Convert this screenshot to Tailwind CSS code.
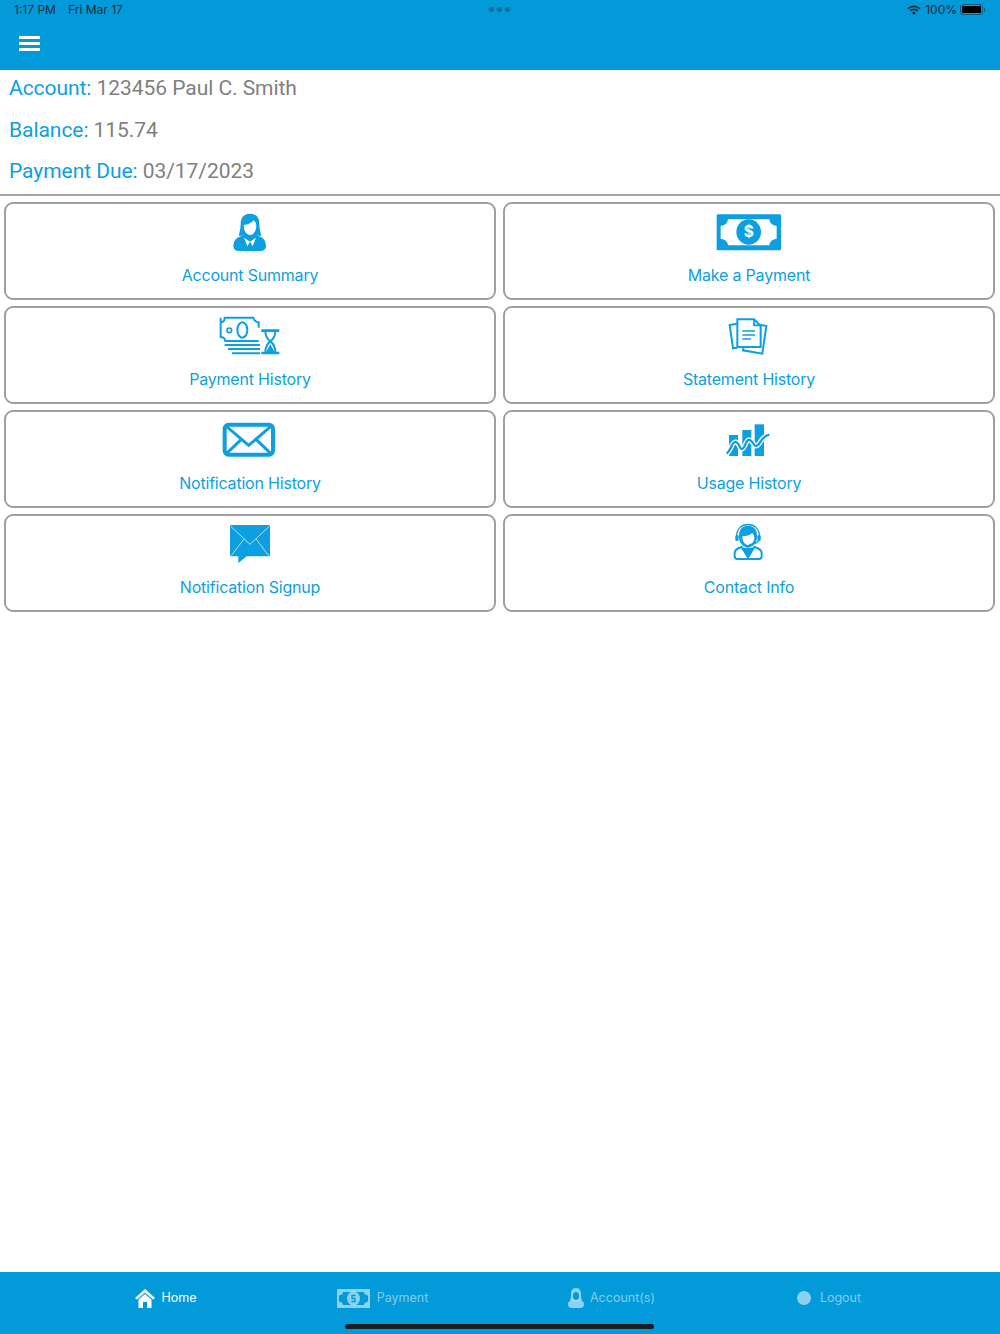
<!DOCTYPE html>
<html lang="en">
<head>
    <meta charset="UTF-8">
    <meta name="viewport" content="width=device-width, initial-scale=1.0">
    <title>Home</title>
    <script src="https://cdn.jsdelivr.net/npm/@tailwindcss/browser@4"></script>
</head>
<body class="bg-white font-['Inter',sans-serif]">
    <div class="flex flex-col w-[1000px] h-[1334px] overflow-hidden">

        <!-- status bar + nav -->
        <header class="h-[70px] shrink-0 bg-[#029ad8]">
            <div class="relative flex items-center h-[19px] pl-[14px] pr-[14px] text-[12px] leading-[19px] text-[#0b2a3c]">
                <span class="w-[54px]">1:17 PM</span>
                <span>Fri Mar 17</span>
                <div class="absolute left-[489px] top-[7px] flex gap-[3px]">
                    <span class="w-[5px] h-[5px] rounded-full bg-[#0b6c9c]"></span>
                    <span class="w-[5px] h-[5px] rounded-full bg-[#0b6c9c]"></span>
                    <span class="w-[5px] h-[5px] rounded-full bg-[#0b6c9c]"></span>
                </div>
                <div class="ml-auto flex items-center">
                    <svg width="14" height="10" viewBox="0 0 14 10" class="mr-[4px]">
                        <path d="M1 3.600 A9 9 0 0 1 13 3.600" fill="none" stroke="#0b2a3c" stroke-width="1.800"/>
                        <path d="M3.200 5.900 A5.800 5.800 0 0 1 10.800 5.900" fill="none" stroke="#0b2a3c" stroke-width="1.800"/>
                        <path d="M7 9.800 L5 7.700 A3 3 0 0 1 9 7.700 Z" fill="#0b2a3c"/>
                    </svg>
                    <span class="mr-[3px]">100%</span>
                    <div class="flex items-center mr-[1px]">
                        <div class="w-[23px] h-[11px] rounded-[3px] border border-[#0b5f8a] p-[1px]">
                            <div class="w-full h-full rounded-[1px] bg-black"></div>
                        </div>
                        <div class="w-[1px] h-[4px] ml-[1px] bg-[#0b5f8a]"></div>
                    </div>
                </div>
            </div>
            <div class="flex flex-col gap-[3px] w-[21px] ml-[19px] mt-[17px]">
                <span class="h-[3px] bg-white"></span>
                <span class="h-[3px] bg-white"></span>
                <span class="h-[3px] bg-white"></span>
            </div>
        </header>

        <!-- account info -->
        <section class="px-[9px] font-['Roboto',sans-serif] text-[21px] leading-[36px] tracking-[-0.05px] text-[#7f7f7f]">
            <p class="h-[36px] mb-[5.5px]"><span class="text-[#0d9fdf]">Account:</span> 123456 Paul C. Smith</p>
            <p class="h-[36px] mb-[5.5px]"><span class="text-[#0d9fdf]">Balance:</span> 115.74</p>
            <p class="h-[36px] mb-[5px]"><span class="text-[#0d9fdf]">Payment Due:</span> 03/17/2023</p>
        </section>
        <div class="h-[2px] bg-[#a3a3a3]"></div>

        <!-- menu -->
        <main class="grid grid-cols-2 gap-x-[7px] gap-y-[6px] pl-[4px] pr-[5px] pt-[6px] flex-1 content-start">
            <a class="flex flex-col items-center h-[98px] pt-[3px] rounded-[9px] border-2 border-[#a0a0a0] text-[16px] tracking-[-0.2px] text-[#0d9fdf]">
                <svg width="80" height="50" viewBox="30 18 240 150">
                    <path d="M100 134 Q100 114 122 106 L150 98 L178 106 Q198 114 198 134 Q198 150 180 150 H118 Q100 150 100 134Z" fill="#0d9fdf"/>
                    <path d="M150 38 C128 38 122 54 122 68 C122 84 118 94 116 104 L184 104 C182 94 178 84 178 68 C178 54 172 38 150 38Z" fill="#0d9fdf"/>
                    <path d="M131 72 Q150 70 162 58 Q169 66 169 74 C169 92 158 102 150 102 C141 102 131 92 131 72Z" fill="#fff"/>
                    <path d="M132 110 L150 122 L142 136Z M168 110 L150 122 L158 136Z" fill="#fff"/>
                </svg>
                <span class="mt-[8px] leading-[20px]">Account Summary</span>
            </a>
            <a class="flex flex-col items-center h-[98px] pt-[3px] rounded-[9px] border-2 border-[#a0a0a0] text-[16px] tracking-[-0.2px] text-[#0d9fdf]">
                <svg width="80" height="50" viewBox="27 3 240 150">
                    <rect x="50" y="25" width="193" height="108" rx="4" fill="#0d9fdf"/>
                    <path d="M84 40 H208 Q210 58 230 60 V98 Q210 100 208 118 H84 Q82 100 62 98 V60 Q82 58 84 40Z" fill="#fff"/>
                    <ellipse cx="146" cy="78" rx="37" ry="38" fill="#0d9fdf"/>
                    <text x="146" y="94" text-anchor="middle" font-size="46" font-weight="700" fill="#fff" font-family="Inter, sans-serif">$</text>
                </svg>
                <span class="mt-[8px] leading-[20px]">Make a Payment</span>
            </a>
            <a class="flex flex-col items-center h-[98px] pt-[3px] rounded-[9px] border-2 border-[#a0a0a0] text-[16px] tracking-[-0.2px] text-[#0d9fdf]">
                <svg width="80" height="50" viewBox="0 0 240 150" fill="none" stroke="#0d9fdf">
                    <path d="M32 34 Q44 34 44 20 H130 Q132 32 146 34 V50 M32 34 V78 Q44 78 46 90 H146 M32 20 V34" stroke-width="6"/>
                    <circle cx="58" cy="58" r="7" stroke-width="5"/>
                    <ellipse cx="97" cy="57" rx="15" ry="23" stroke-width="6"/>
                    <path d="M44 102 H150 M54 114 H150 M66 127 H150" stroke-width="6"/>
                    <path d="M154 59 H208 M154 126 H208" stroke-width="8"/>
                    <path d="M166 60 Q166 80 181 91 Q196 80 196 60 M181 91 Q166 102 166 124 M181 91 Q196 102 196 124" stroke-width="6"/>
                    <path d="M181 100 L168 124 H194Z" fill="#0d9fdf" stroke="none"/>
                </svg>
                <span class="mt-[8px] leading-[20px]">Payment History</span>
            </a>
            <a class="flex flex-col items-center h-[98px] pt-[3px] rounded-[9px] border-2 border-[#a0a0a0] text-[16px] tracking-[-0.2px] text-[#0d9fdf]">
                <svg width="80" height="50" viewBox="-30 0 240 150" fill="none" stroke="#0d9fdf">
                    <path d="M55 38 L32 42 L42 112 L55 110" stroke-width="6"/>
                    <path d="M125 42 L142 45 L130 128 L72 118 L74 108" stroke-width="6"/>
                    <path d="M55 25 H105 L125 45 V108 H55Z" stroke-width="6" fill="#fff"/>
                    <path d="M105 25 V43 H125" stroke-width="5"/>
                    <path d="M70 60 H108 M70 72 H108 M70 84 H96" stroke-width="5"/>
                </svg>
                <span class="mt-[8px] leading-[20px]">Statement History</span>
            </a>
            <a class="flex flex-col items-center h-[98px] pt-[3px] rounded-[9px] border-2 border-[#a0a0a0] text-[16px] tracking-[-0.2px] text-[#0d9fdf]">
                <svg width="80" height="50" viewBox="0 -3 240 150" fill="none" stroke="#0d9fdf">
                    <rect x="44" y="26" width="145" height="90" rx="12" stroke-width="12"/>
                    <path d="M50 32 L116 88 L182 32" stroke-width="9"/>
                    <path d="M50 112 L94 70 M182 112 L138 70" stroke-width="9"/>
                </svg>
                <span class="mt-[8px] leading-[20px]">Notification History</span>
            </a>
            <a class="flex flex-col items-center h-[98px] pt-[3px] rounded-[9px] border-2 border-[#a0a0a0] text-[16px] tracking-[-0.2px] text-[#0d9fdf]">
                <svg width="80" height="50" viewBox="-15 -3 240 150" fill="none">
                    <rect x="45" y="57" width="27" height="63" fill="#0d9fdf"/>
                    <rect x="85" y="42" width="27" height="78" fill="#0d9fdf"/>
                    <rect x="122" y="25" width="28" height="95" fill="#0d9fdf"/>
                    <path d="M38 113 Q44 108 50 96 Q58 76 66 78 Q72 80 78 94 Q84 106 92 90 Q100 68 108 72 Q114 76 122 88 Q130 94 140 76 Q150 60 166 56" stroke="#fff" stroke-width="15"/>
                    <path d="M38 113 Q44 108 50 96 Q58 76 66 78 Q72 80 78 94 Q84 106 92 90 Q100 68 108 72 Q114 76 122 88 Q130 94 140 76 Q150 60 166 56" stroke="#0d9fdf" stroke-width="7"/>
                </svg>
                <span class="mt-[8px] leading-[20px]">Usage History</span>
            </a>
            <a class="flex flex-col items-center h-[98px] pt-[3px] rounded-[9px] border-2 border-[#a0a0a0] text-[16px] tracking-[-0.2px] text-[#0d9fdf]">
                <svg width="80" height="50" viewBox="-30 0 240 150" fill="none">
                    <path d="M34 18 H146 Q150 18 150 22 V108 Q150 112 146 112 H80 L55 132 V112 H34 Q30 112 30 108 V22 Q30 18 34 18Z" fill="#0d9fdf"/>
                    <path d="M32 22 L90 76 L148 22 M34 110 L72 60 M146 110 L108 60" stroke="#fff" stroke-opacity=".8" stroke-width="2.500"/>
                </svg>
                <span class="mt-[8px] leading-[20px]">Notification Signup</span>
            </a>
            <a class="flex flex-col items-center h-[98px] pt-[3px] rounded-[9px] border-2 border-[#a0a0a0] text-[16px] tracking-[-0.2px] text-[#0d9fdf]">
                <svg width="80" height="50" viewBox="-30 0 240 150" fill="none">
                    <path d="M47 102 Q47 90 68 84 L87 115 L106 84 Q128 90 128 102 V112 Q128 120 120 120 H55 Q47 120 47 112Z" stroke="#0d9fdf" stroke-width="6"/>
                    <path d="M70 86 H104 L87 116Z" fill="#0d9fdf"/>
                    <path d="M87 20 C66 20 60 36 60 50 C60 68 66 80 87 86 C108 80 114 68 114 50 C114 36 108 20 87 20Z" fill="#0d9fdf"/>
                    <path d="M70 52 Q88 52 100 42 Q106 48 106 56 C106 70 95 78 87 78 C79 78 70 70 70 52Z" fill="#fff"/>
                    <path d="M53 54 C50 4 124 4 121 54" stroke="#0d9fdf" stroke-width="4"/>
                    <path d="M120 60 Q120 74 90 77" stroke="#0d9fdf" stroke-width="4"/>
                    <rect x="49" y="48" width="10" height="18" rx="4" fill="#0d9fdf"/>
                    <rect x="115" y="48" width="10" height="18" rx="4" fill="#0d9fdf"/>
                </svg>
                <span class="mt-[8px] leading-[20px]">Contact Info</span>
            </a>
        </main>

        <!-- tab bar -->
        <footer class="relative h-[62px] shrink-0 bg-[#029ad8] text-[12.500px] pl-[58px] pr-[74px]">
            <div class="grid grid-cols-[216px_217px_241px_194px] h-[52px]">
                <div class="flex items-center justify-center gap-[6px] text-white">
                    <svg width="20" height="19" viewBox="0 0 20 19">
                        <path d="M10 0 L20 9 L18 10.500 L10 3.500 L2 10.500 L0 9Z" fill="#fff"/>
                        <path d="M3.500 10.500 L10 5 L16.500 10.500 V19 H12 V13 H8 V19 H3.500Z" fill="#fff"/>
                    </svg>
                    <span class="pt-[1px]">Home</span>
                </div>
                <div class="flex items-center justify-center gap-[7px] text-white/50">
                    <svg width="33" height="19" viewBox="0 0 33 19">
                        <rect width="33" height="19" rx="1" fill="#fff" fill-opacity=".55"/>
                        <path d="M6 3 H27 Q27 6 31 6.500 V12.500 Q27 13 27 16 H6 Q6 13 2 12.500 V6.500 Q6 6 6 3Z" fill="#029ad8"/>
                        <ellipse cx="16.500" cy="9.500" rx="6.500" ry="7" fill="#fff" fill-opacity=".55"/>
                        <path d="M18.500 6.500 H15 V9.500 H18 V12.500 H14.500" fill="none" stroke="#029ad8" stroke-width="1.300"/>
                    </svg>
                    <span class="pt-[1px]">Payment</span>
                </div>
                <div class="flex items-center justify-center gap-[6px] text-white/50">
                    <svg width="16" height="20" viewBox="0 0 16 20">
                        <path d="M0 16 Q0 13 4 12 L8 11 L12 12 Q16 13 16 16 Q16 20 12 20 H4 Q0 20 0 16Z" fill="#fff" fill-opacity=".55"/>
                        <path d="M8 0 C4 0 3 3 3 6 C3 9 2.500 11 2 12.500 H14 C13.500 11 13 9 13 6 C13 3 12 0 8 0Z" fill="#fff" fill-opacity=".55"/>
                        <ellipse cx="8" cy="8" rx="3" ry="4" fill="#029ad8"/>
                    </svg>
                    <span class="pt-[1px]">Account(s)</span>
                </div>
                <div class="flex items-center justify-center gap-[9px] text-white/50">
                    <span class="w-[14px] h-[14px] rounded-full bg-white/55"></span>
                    <span class="pt-[1px]">Logout</span>
                </div>
            </div>
            <div class="absolute left-[345px] bottom-[5px] w-[309px] h-[5px] rounded-full bg-[#1c1c1e]"></div>
        </footer>
    </div>
</body>
</html>
